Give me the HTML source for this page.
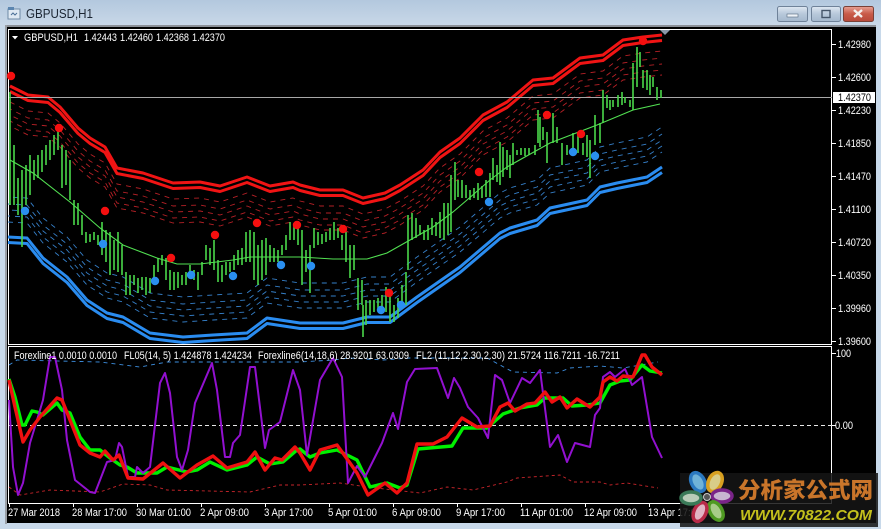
<!DOCTYPE html>
<html><head><meta charset="utf-8"><style>
html,body{margin:0;padding:0;background:#c8d9ea}
#w{position:relative;width:881px;height:529px;overflow:hidden}
svg{position:absolute;left:0;top:0}
text{font-family:"Liberation Sans",sans-serif;font-size:10.8px;fill:#fff}
</style></head><body><div id="w">
<svg width="881" height="529" viewBox="0 0 881 529" xmlns="http://www.w3.org/2000/svg">
<defs>
<linearGradient id="t" x1="0" y1="0" x2="0" y2="1"><stop offset="0" stop-color="#b3c8de"/><stop offset="1" stop-color="#c9d8e8"/></linearGradient>
<linearGradient id="b1" x1="0" y1="0" x2="0" y2="1"><stop offset="0" stop-color="#dfe8f2"/><stop offset=".5" stop-color="#b7c8da"/><stop offset="1" stop-color="#a4b8cd"/></linearGradient>
<linearGradient id="b2" x1="0" y1="0" x2="0" y2="1"><stop offset="0" stop-color="#e8a294"/><stop offset=".5" stop-color="#c85a48"/><stop offset="1" stop-color="#b84a3a"/></linearGradient>
<polyline id="R" fill="none" stroke-linejoin="round" points="10,86 28,95 48,97 60,107 78,128 90,138 105,147 117,168 143,173 173,183 200,182 220,186 247,177 270,186 293,182 300,185 320,190 343,190 363,198 385,193 400,185 423,170 440,152 460,138 483,115 507,102 533,80 553,78 580,58 603,55 623,40 643,37 662,35"/>
<polyline id="B" fill="none" stroke-linejoin="round" points="8,237 27,238 43,258 67,277 87,300 107,313 123,317 150,333 183,337 213,335 247,333 267,318 300,323 343,323 367,317 390,317 417,297 460,267 500,233 510,228 537,220 550,208 587,200 600,187 617,183 647,177 662,167"/>
</defs>
<rect width="881" height="529" fill="#c8d9ea"/>
<rect width="881" height="26" fill="url(#t)"/>
<rect x="5" y="25" width="871" height="2" fill="#8b9097"/>
<rect x="5" y="25" width="2" height="499" fill="#9a9fa6"/>
<rect x="7" y="27" width="869" height="496" fill="#000"/>

<!-- title -->
<rect x="8" y="9" width="12" height="10" fill="#dfe9f3" stroke="#6f8aa6"/>
<rect x="8" y="7" width="6" height="3" fill="#5c86b0"/>
<path d="M11 15l2-2 2 2 2-2" stroke="#4a6f96" fill="none"/>
<text x="26" y="18" style="font-size:13px;fill:#1c2633" textLength="67" lengthAdjust="spacingAndGlyphs">GBPUSD,H1</text>
<rect x="777.5" y="6.5" width="30" height="15" rx="2" fill="url(#b1)" stroke="#6f8299"/>
<rect x="787" y="14" width="11" height="3" fill="#eef3f8" stroke="#56687d" stroke-width=".6"/>
<rect x="811.5" y="6.5" width="29" height="15" rx="2" fill="url(#b1)" stroke="#6f8299"/>
<rect x="822" y="10.5" width="8" height="7" fill="none" stroke="#45566a" stroke-width="1.4"/>
<rect x="843.5" y="6.5" width="30" height="15" rx="2" fill="url(#b2)" stroke="#7a4036"/>
<path d="M854 10l8 7M862 10l-8 7" stroke="#f4f0ee" stroke-width="2.4"/>

<!-- pane frames -->
<rect x="8.5" y="29.5" width="823" height="315" fill="#000" stroke="#fff"/>
<rect x="8.5" y="346.5" width="823" height="157" fill="#000" stroke="#fff"/>
<path d="M660 30h10l-5 5z" fill="#8a97a8"/>
<path d="M12 36h6l-3 3.5z" fill="#fff"/>

<!-- upper dashed bands -->
<g stroke="#b52026" stroke-width=".9" stroke-dasharray="5 5">
<use href="#R" y="16"/><use href="#R" y="23" stroke-dashoffset="3"/><use href="#R" y="29" stroke-dashoffset="6"/><use href="#R" y="35" stroke-dashoffset="2"/><use href="#R" y="40" stroke-dashoffset="5"/>
</g>
<g stroke="#357fc8" stroke-width=".9" stroke-dasharray="5 5">
<use href="#B" y="-15"/><use href="#B" y="-21" stroke-dashoffset="3"/><use href="#B" y="-27" stroke-dashoffset="6"/><use href="#B" y="-33" stroke-dashoffset="2"/><use href="#B" y="-40" stroke-dashoffset="5"/>
</g>
<!-- bands -->
<g stroke="#f01414" stroke-width="3"><use href="#R"/><use href="#R" y="5.5"/></g>
<g stroke="#2a8cf0" stroke-width="3"><use href="#B"/><use href="#B" y="5.5"/></g>

<!-- current price line -->
<rect x="9" y="97" width="823" height="1" fill="#a8a8a8"/>

<!-- candles -->
<path fill="none" stroke="#4ad84a" stroke-width="1.6" d="M10 92V205M14 145V205M18 178V215M22 170V247M26 165V205M30 155V195M34 160V180M38 155V178M42 150V172M46 145V165M50 140V160M54 135V155M58 128V150M62 145V188M66 150V185M70 160V200M74 200V225M78 203V225M82 215V235M86 232V243M90 234V242M94 232V240M98 235V245M102 222V255M106 230V262M110 232V275M114 240V270M118 232V272M122 245V275M126 272V295M130 275V295M134 275V285M138 278V293M142 277V290M146 277V295M150 278V293M154 265V283M158 258V272M162 255V265M166 258V280M170 270V290M174 272V290M178 272V288M182 275V285M186 272V285M190 265V278M194 270V280M198 272V290M202 262V275M206 245V260M210 248V265M214 240V270M218 260V282M222 265V282M226 262V275M230 262V272M234 255V270M238 250V265M242 248V265M246 232V262M250 230V262M254 232V280M258 245V285M262 240V280M266 238V275M270 245V262M274 248V262M278 250V262M282 245V255M286 235V250M290 222V240M294 225V240M298 225V245M302 230V285M306 250V272M310 245V293M314 228V248M318 232V245M322 234V244M326 232V242M330 228V240M334 222V240M338 228V238M342 235V250M346 232V262M350 245V278M354 245V270M358 278V310M362 280V305M366 300V325M363 305V337M370 300V315M374 300V312M378 298V308M382 295V310M386 287V312M390 292V322M394 305V322M398 298V318M402 285V305M406 272V305M408 215V270M412 213V240M416 218V238M420 225V235M424 230V240M428 225V240M432 218V235M436 222V236M440 212V238M444 203V240M448 203V235M451 175V232M455 162V200M458 180V197M462 180V198M466 185V198M470 190V200M474 188V198M478 183V200M482 186V198M486 180V197M490 173V197M493 158V180M497 165V182M500 142V185M503 147V177M507 150V170M510 155V178M513 143V165M517 150V155M521 148V155M525 148V156M529 148V155M535 145V155M538 110V143M540 117V147M543 127V140M547 132V163M553 113V143M557 127V143M562 143V165M567 145V155M573 133V155M578 133V153M583 143V155M587 135V157M590 140V178M595 115V145M600 123V143M603 90V123M607 95V108M610 100V110M613 100V107M618 95V107M622 92V105M625 97V103M630 100V107M633 63V110M637 47V87M640 52V67M643 70V88M647 70V90M650 75V95M653 77V87M657 87V100M661 90V98"/>
<!-- MA -->
<polyline fill="none" stroke="#52e052" stroke-width="1.1" points="10,160 33,173 70,202 100,228 123,245 157,258 177,264 200,264 233,260 250,257 300,257 333,259 367,259 387,253 410,240 433,227 453,212 467,200 490,180 507,167 550,143 597,125 633,110 660,104"/>

<!-- dots -->
<g fill="#f50f0f"><circle cx="11" cy="76" r="4.2"/><circle cx="59" cy="128" r="4.2"/><circle cx="105" cy="211" r="4.2"/><circle cx="171" cy="258" r="4.2"/><circle cx="215" cy="235" r="4.2"/><circle cx="257" cy="223" r="4.2"/><circle cx="297" cy="225" r="4.2"/><circle cx="343" cy="229" r="4.2"/><circle cx="389" cy="293" r="4.2"/><circle cx="479" cy="172" r="4.2"/><circle cx="547" cy="115" r="4.2"/><circle cx="581" cy="134" r="4.2"/><circle cx="643" cy="41" r="4.2"/></g>
<g fill="#2a8ff0"><circle cx="25" cy="211" r="4.2"/><circle cx="103" cy="244" r="4.2"/><circle cx="155" cy="281" r="4.2"/><circle cx="191" cy="275" r="4.2"/><circle cx="233" cy="276" r="4.2"/><circle cx="281" cy="265" r="4.2"/><circle cx="311" cy="266" r="4.2"/><circle cx="381" cy="310" r="4.2"/><circle cx="401" cy="305" r="4.2"/><circle cx="489" cy="202" r="4.2"/><circle cx="573" cy="152" r="4.2"/><circle cx="595" cy="156" r="4.2"/></g>

<!-- legend top -->
<text x="24" y="41" textLength="54" lengthAdjust="spacingAndGlyphs">GBPUSD,H1</text>
<text x="84" y="41" textLength="33" lengthAdjust="spacingAndGlyphs">1.42443</text><text x="120" y="41" textLength="33" lengthAdjust="spacingAndGlyphs">1.42460</text><text x="156" y="41" textLength="33" lengthAdjust="spacingAndGlyphs">1.42368</text><text x="192" y="41" textLength="33" lengthAdjust="spacingAndGlyphs">1.42370</text>

<!-- price axis -->
<g stroke="#fff"><path d="M832 44.5h4M832 77.5h4M832 110.5h4M832 143.5h4M832 176.5h4M832 209.5h4M832 242.5h4M832 275.5h4M832 308.5h4M832 341.5h4M832 353.5h4M832 425.5h4"/></g>
<rect x="833" y="92" width="42" height="11" fill="#fff"/>
<text x="838" y="48" textLength="33" lengthAdjust="spacingAndGlyphs">1.42980</text>
<text x="838" y="81" textLength="33" lengthAdjust="spacingAndGlyphs">1.42600</text>
<text x="838" y="101" textLength="33" lengthAdjust="spacingAndGlyphs" style="fill:#000">1.42370</text>
<text x="838" y="114" textLength="33" lengthAdjust="spacingAndGlyphs">1.42230</text>
<text x="838" y="147" textLength="33" lengthAdjust="spacingAndGlyphs">1.41850</text>
<text x="838" y="180" textLength="33" lengthAdjust="spacingAndGlyphs">1.41470</text>
<text x="838" y="213" textLength="33" lengthAdjust="spacingAndGlyphs">1.41100</text>
<text x="838" y="246" textLength="33" lengthAdjust="spacingAndGlyphs">1.40720</text>
<text x="838" y="279" textLength="33" lengthAdjust="spacingAndGlyphs">1.40350</text>
<text x="838" y="312" textLength="33" lengthAdjust="spacingAndGlyphs">1.39960</text>
<text x="838" y="345" textLength="33" lengthAdjust="spacingAndGlyphs">1.39600</text>
<text x="836" y="357" textLength="15" lengthAdjust="spacingAndGlyphs">100</text>
<text x="835" y="429" textLength="18" lengthAdjust="spacingAndGlyphs">0.00</text>

<!-- lower pane -->
<path d="M9 425.5H832" stroke="#e8e8e8" stroke-dasharray="4 3"/>
<polyline fill="none" stroke="#3d8fe0" stroke-width=".9" stroke-dasharray="4 4" points="9,365 17,360 100,362 140,367 167,362 300,362 333,360 350,358 383,360 410,358 487,358 513,372 557,373 570,368 600,366 623,368 658,362"/>
<polyline fill="none" stroke="#c9252b" stroke-width=".9" stroke-dasharray="3 3" points="9,487 20,495 50,490 100,492 123,484 150,485 167,490 250,492 280,485 300,485 340,483 367,487 420,493 447,487 473,490 507,482 517,478 560,475 573,482 600,482 610,485 627,483 658,488"/>
<polyline fill="none" stroke="#00f000" stroke-width="3.4" stroke-linejoin="round" points="9,379 15,397 22,425 25,425 32,411 37,412 43,415 57,403 62,410 70,413 80,437 90,450 100,450 110,458 120,465 127,467 137,473 157,473 167,467 187,472 197,470 210,462 227,470 247,465 257,457 270,464 283,462 297,450 300,449 310,457 320,453 337,450 357,460 370,487 387,483 400,488 407,485 418,449 452,446 463,428 487,428 503,414 520,408 537,405 545,398 563,398 572,406 587,405 600,403 610,385 620,381 630,380 642,365 650,371 662,373"/>
<polyline fill="none" stroke="#9210d0" stroke-width="2" stroke-linejoin="round" points="9,400 13,467 18,495 23,483 30,443 37,420 43,400 50,357 55,357 62,390 67,440 75,480 90,492 95,493 107,462 115,460 119,443 122,447 128,477 135,477 137,467 143,473 150,467 160,383 165,373 170,393 177,457 182,470 188,450 195,403 212,363 217,390 225,457 230,457 233,443 240,435 250,367 255,367 265,448 269,430 280,422 293,370 300,390 307,455 320,380 333,358 342,377 348,483 357,466 365,477 382,443 393,413 398,429 407,382 415,369 437,368 448,398 454,378 460,388 468,407 478,418 488,438 495,375 502,380 510,403 522,378 530,383 540,370 550,447 558,435 567,462 575,443 590,447 595,415 600,408 603,377 610,372 615,377 625,369 632,385 642,377 652,437 662,458"/>
<polyline fill="none" stroke="#f01010" stroke-width="3.4" stroke-linejoin="round" points="9,380 15,407 23,442 30,430 40,417 57,398 62,400 80,445 90,453 100,457 105,451 113,460 119,455 128,478 143,479 163,463 180,478 197,465 213,456 227,468 247,462 255,452 265,470 275,458 282,460 295,447 300,453 310,470 320,450 337,445 350,463 357,473 368,495 385,483 397,493 407,483 417,444 433,444 447,437 462,418 477,427 490,426 500,407 508,403 515,411 527,404 535,403 545,392 552,402 560,397 567,408 577,399 590,407 600,397 603,382 610,377 617,381 623,376 633,377 642,355 645,355 652,367 662,375"/>

<!-- legend lower -->
<text x="14" y="359" textLength="103" lengthAdjust="spacingAndGlyphs">Forexline1 0.0010 0.0010</text>
<text x="124" y="359" textLength="128" lengthAdjust="spacingAndGlyphs">FL05(14, 5) 1.424878 1.424234</text>
<text x="258" y="359" textLength="151" lengthAdjust="spacingAndGlyphs">Forexline6(14,18,6) 28.9201 63.0309</text>
<text x="416" y="359" textLength="204" lengthAdjust="spacingAndGlyphs">FL2 (11,12,2.30,2.30) 21.5724 116.7211 -16.7211</text>

<!-- time axis -->
<path stroke="#fff" d="M9.5 503v4M73.5 503v4M137.5 503v4M201.5 503v4M265.5 503v4M329.5 503v4M393.5 503v4M457.5 503v4M521.5 503v4M585.5 503v4M649.5 503v4"/>
<text x="8" y="516" textLength="52" lengthAdjust="spacingAndGlyphs">27 Mar 2018</text>
<text x="72" y="516" textLength="55" lengthAdjust="spacingAndGlyphs">28 Mar 17:00</text>
<text x="136" y="516" textLength="55" lengthAdjust="spacingAndGlyphs">30 Mar 01:00</text>
<text x="200" y="516" textLength="49" lengthAdjust="spacingAndGlyphs">2 Apr 09:00</text>
<text x="264" y="516" textLength="49" lengthAdjust="spacingAndGlyphs">3 Apr 17:00</text>
<text x="328" y="516" textLength="49" lengthAdjust="spacingAndGlyphs">5 Apr 01:00</text>
<text x="392" y="516" textLength="49" lengthAdjust="spacingAndGlyphs">6 Apr 09:00</text>
<text x="456" y="516" textLength="49" lengthAdjust="spacingAndGlyphs">9 Apr 17:00</text>
<text x="520" y="516" textLength="53" lengthAdjust="spacingAndGlyphs">11 Apr 01:00</text>
<text x="584" y="516" textLength="53" lengthAdjust="spacingAndGlyphs">12 Apr 09:00</text>
<text x="648" y="516" textLength="53" lengthAdjust="spacingAndGlyphs">13 Apr 17:00</text>

<!-- watermark -->
<rect x="680" y="473" width="198" height="54" fill="#151515" fill-opacity=".86"/>
<g transform="translate(707 497)" stroke-width="3.5">
<ellipse cx="-9" cy="-15" rx="6.5" ry="10" transform="rotate(-28 -9 -15)" fill="#6fb2d8" stroke="#2a78c0"/>
<ellipse cx="8" cy="-15" rx="6.5" ry="10" transform="rotate(25 8 -15)" fill="#d8cc88" stroke="#d8a020"/>
<ellipse cx="15" cy="-1" rx="10" ry="6" fill="#c8b4d0" stroke="#7a2488"/>
<ellipse cx="9" cy="14" rx="6" ry="10" transform="rotate(-30 9 14)" fill="#a8cc88" stroke="#4f9a22"/>
<ellipse cx="-7" cy="15" rx="6" ry="10" transform="rotate(25 -7 15)" fill="#e0b4c4" stroke="#b82a48"/>
<ellipse cx="-16" cy="1" rx="10" ry="6" fill="#b8ccb8" stroke="#3a7a58"/>
<circle r="3.5" fill="#555" stroke="#ccc" stroke-width="1"/>
</g>
<text x="738" y="498" textLength="135" lengthAdjust="spacingAndGlyphs" style="font-family:'Liberation Sans','Noto Sans CJK SC',sans-serif;font-size:22px;font-weight:900;fill:#c9752a">分析家公式网</text>
<text x="740" y="520" textLength="132" lengthAdjust="spacingAndGlyphs" style="font-size:14.5px;font-weight:700;font-style:italic;fill:#c4c01c">WWW.70822.COM</text>
</svg>
</div></body></html>
